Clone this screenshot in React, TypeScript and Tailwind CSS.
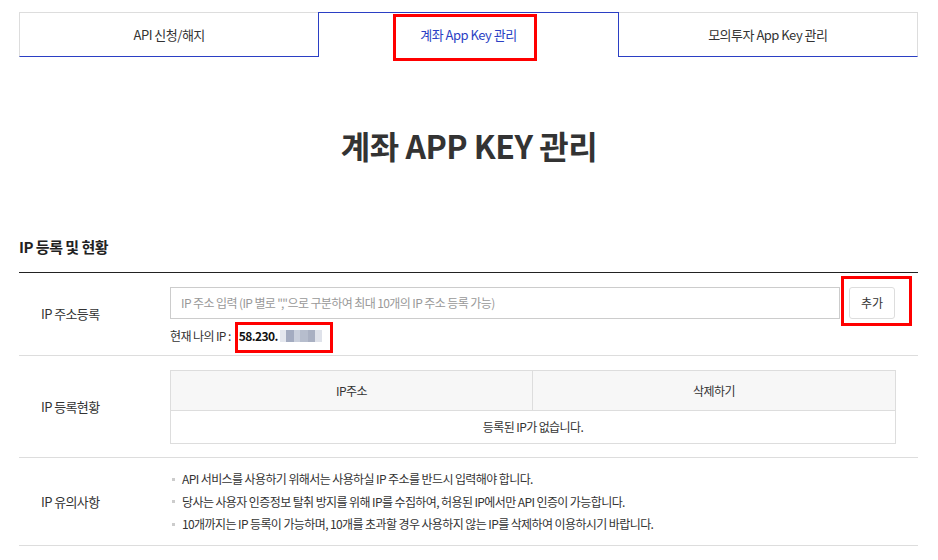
import React from 'react'

const font = { fontFamily: '"Noto Sans CJK KR", "Noto Sans", sans-serif' }

const notes = [
  'API 서비스를 사용하기 위해서는 사용하실 IP 주소를 반드시 입력해야 합니다.',
  '당사는 사용자 인증정보 탈취 방지를 위해 IP를 수집하여, 허용된 IP에서만 API 인증이 가능합니다.',
  '10개까지는 IP 등록이 가능하며, 10개를 초과할 경우 사용하지 않는 IP를 삭제하여 이용하시기 바랍니다.',
]

const BlurBlocks = () => (
  <span className="ml-[2px] inline-flex h-[12px] items-stretch">
    <span className="w-[6px] bg-[#e4e7ee]" />
    <span className="w-[8px] bg-[#a3abc0]" />
    <span className="w-[6px] bg-[#c9cfdc]" />
    <span className="w-[8px] bg-[#b6bdcd]" />
    <span className="w-[7px] bg-[#a9b0c2]" />
    <span className="w-[7px] bg-[#dfe2ea]" />
  </span>
)

export default function App() {
  return (
    <div className="relative h-[560px] w-[938px] overflow-hidden bg-white text-[#333]" style={font}>
      {/* tabs */}
      <div className="ml-[19px] mt-[12px] flex w-[899px]">
        <div className="flex h-[45px] flex-1 items-center justify-center border border-b-[#2b3fc4] border-l-[#ddd] border-r-0 border-t-[#ddd] text-[13px] tracking-[-0.5px] text-[#333]">
          API 신청/해지
        </div>
        <div className="flex h-[45px] flex-1 items-center justify-center border border-b-0 border-[#2b3fc4] text-[13px] tracking-[-0.5px] text-[#2b3fc4]">
          계좌 App Key 관리
        </div>
        <div className="flex h-[45px] flex-1 items-center justify-center border border-b-[#2b3fc4] border-l-0 border-r-[#ddd] border-t-[#ddd] text-[13px] tracking-[-0.5px] text-[#333]">
          모의투자 App Key 관리
        </div>
      </div>

      <h1 className="mt-[64px] text-center text-[32px] font-bold leading-[48px] tracking-[-0.5px] text-[#333]">
        계좌 APP KEY 관리
      </h1>

      <div className="ml-[19px] w-[899px]">
        <h2 className="mt-[67px] text-[15px] font-bold leading-[22px] tracking-[-0.5px] text-[#222]">IP 등록 및 현황</h2>
        <div className="mt-[14px] border-t border-[#222]">
          {/* row 1 */}
          <div className="flex h-[83px] border-b border-[#ddd]">
            <div className="flex w-[151px] items-center pl-[22px] text-[13px] tracking-[-0.6px]">IP 주소등록</div>
            <div className="flex-1 pt-[14px]">
              <div className="flex gap-[9px]">
                <div className="flex h-[32px] w-[670px] items-center border border-[#ccc] px-[10px] text-[12px] tracking-[-0.6px] text-[#999]">
                  IP 주소 입력 (IP 별로 ","으로 구분하여 최대 10개의 IP 주소 등록 가능)
                </div>
                <button className="h-[32px] w-[46px] rounded-[3px] border border-[#ddd] bg-white text-[12px] text-[#333]">
                  추가
                </button>
              </div>
              <div className="mt-[4px] flex items-center text-[12px] leading-[26px] tracking-[-0.6px]">
                <span>현재 나의 IP :</span>
                <span className="ml-[8px] font-bold text-[#111]">58.230.</span>
                <BlurBlocks />
              </div>
            </div>
          </div>

          {/* row 2 */}
          <div className="flex h-[102px] border-b border-[#ddd]">
            <div className="flex w-[151px] items-center pl-[22px] text-[13px] tracking-[-0.6px]">IP 등록현황</div>
            <div className="flex-1 pt-[14px]">
              <div className="w-[726px] border border-[#ddd] text-[12px] tracking-[-0.6px]">
                <div className="flex h-[40px] border-b border-[#ddd] bg-[#f7f7f7]">
                  <div className="flex w-[362px] items-center justify-center border-r border-[#ddd]">IP주소</div>
                  <div className="flex flex-1 items-center justify-center">삭제하기</div>
                </div>
                <div className="flex h-[32px] items-center justify-center">등록된 IP가 없습니다.</div>
              </div>
            </div>
          </div>

          {/* row 3 */}
          <div className="flex h-[88px] border-b border-[#ddd]">
            <div className="flex w-[151px] items-center pl-[22px] text-[13px] tracking-[-0.6px]">IP 유의사항</div>
            <ul className="flex-1 pl-[2px] pt-[10px] text-[12px] leading-[22.5px] tracking-[-0.6px]">
              {notes.map((n) => (
                <li key={n} className="flex items-center">
                  <span className="mr-[7px] h-[3px] w-[3px] bg-[#ccc]" />
                  {n}
                </li>
              ))}
            </ul>
          </div>
        </div>
      </div>

      {/* annotation boxes */}
      <div className="absolute left-[393px] top-[14px] h-[47px] w-[144px] border-[3px] border-[#f00]" />
      <div className="absolute left-[841px] top-[276px] h-[50px] w-[71px] border-[3px] border-[#f00]" />
      <div className="absolute left-[235px] top-[322px] h-[31px] w-[98px] border-[3px] border-[#f00]" />
    </div>
  )
}
